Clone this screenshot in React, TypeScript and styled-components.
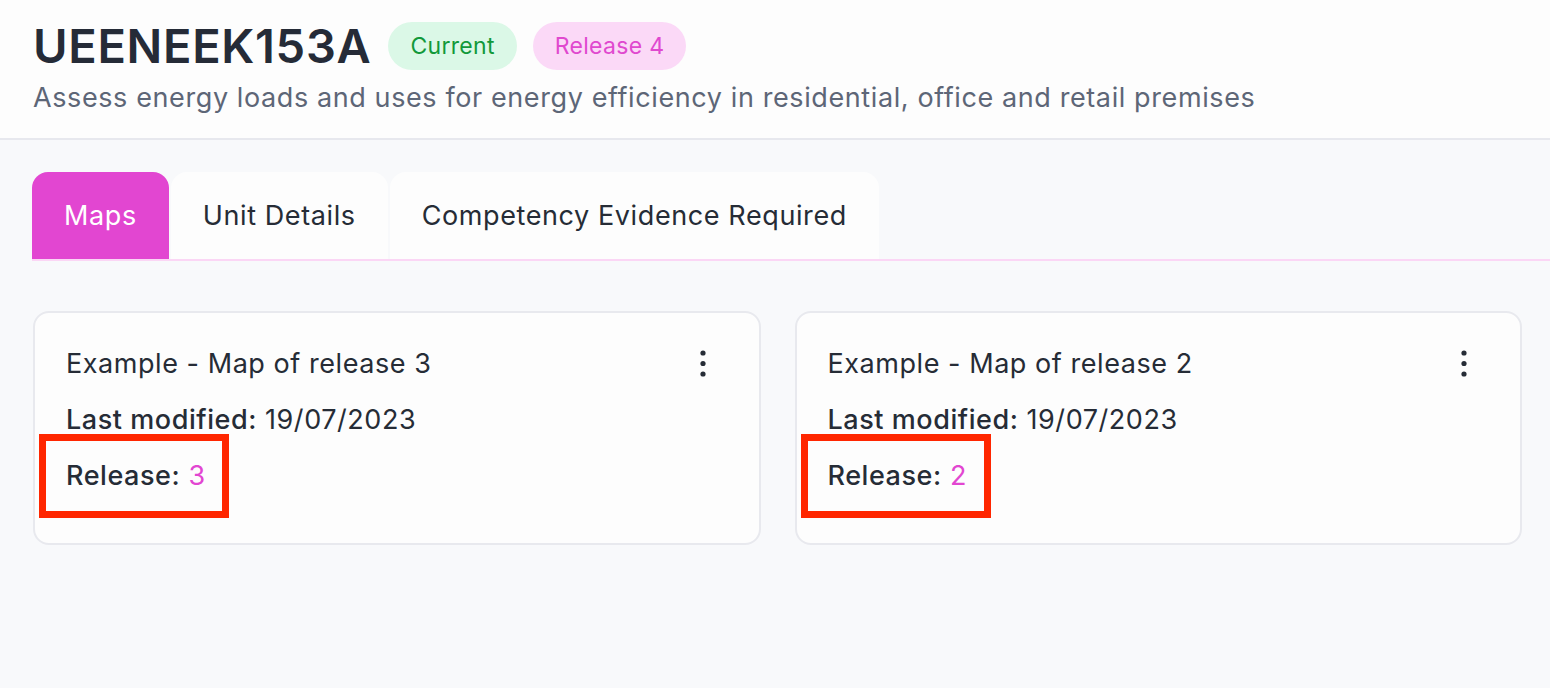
import styled, { createGlobalStyle } from "styled-components";

const GlobalStyle = createGlobalStyle`
  body {
    margin: 0;
    background: #f8f9fb;
    font-family: Inter, "Noto Sans", sans-serif;
    color: #262c36;
  }
`;

const Header = styled.header`
  background: #fdfdfd;
  border-bottom: 2px solid #e7e8ee;
  padding: 20px 33px 24px;
`;

const TitleRow = styled.div`
  display: flex;
  align-items: center;
  gap: 16px;
`;

const Title = styled.h1`
  margin: 0 1px 0 0;
  font-size: 47px;
  font-weight: 600;
  line-height: 52px;
  color: #252b37;
  letter-spacing: 0.7px;
`;

const Badge = styled.span<{ $tone: "green" | "pink" }>`
  display: inline-flex;
  align-items: center;
  height: 48px;
  padding: 0 22px;
  border-radius: 24px;
  font-size: 23px;
  letter-spacing: 0.3px;
  background: ${({ $tone }) => ($tone === "green" ? "#dbf8e7" : "#fbd9f7")};
  color: ${({ $tone }) => ($tone === "green" ? "#12993a" : "#e049cf")};
`;

const Subtitle = styled.p`
  margin: 10px 0 0;
  font-size: 27px;
  line-height: 32px;
  letter-spacing: 0.6px;
  color: #5d6677;
`;

const Main = styled.main`
  padding: 32px 28px 0 32px;
`;

const TabList = styled.div`
  display: flex;
  gap: 2px;
  border-bottom: 2px solid #fbd6f5;
  margin-right: -28px;
`;

const Tab = styled.button<{ $active?: boolean }>`
  height: 87px;
  padding: 0 32px;
  border: none;
  border-radius: 16px 16px 0 0;
  font-family: inherit;
  font-size: 27px;
  letter-spacing: 0.6px;
  cursor: pointer;
  background: ${({ $active }) => ($active ? "#e246d1" : "#fdfdfd")};
  color: ${({ $active }) => ($active ? "#ffffff" : "#262c36")};
`;

const CardGrid = styled.div`
  display: grid;
  grid-template-columns: 1fr 1fr;
  gap: 34px;
  margin-top: 50px;
  padding-left: 1px;
`;

const Card = styled.div`
  background: #fdfdfd;
  border: 2px solid #e8e9ee;
  border-radius: 16px;
  padding: 35px 31px 51px;
  display: flex;
  flex-direction: column;
  gap: 24px;
`;

const CardHead = styled.div`
  display: flex;
  align-items: center;
  justify-content: space-between;
  height: 32px;
`;

const Line = styled.div`
  position: relative;
  font-size: 27px;
  line-height: 32px;
  letter-spacing: 0.55px;
`;

const Label = styled.span`
  font-weight: 500;
`;

const Pink = styled.span`
  color: #e246d1;
`;

const MenuButton = styled.button`
  width: 40px;
  height: 40px;
  margin: -4px 5px -4px 0;
  border: none;
  background: transparent;
  display: flex;
  align-items: center;
  justify-content: center;
  padding: 0;
  cursor: pointer;
`;

const Highlight = styled.span`
  position: absolute;
  left: -27px;
  top: -26px;
  width: 190px;
  height: 84px;
  box-sizing: border-box;
  border: 7px solid #ff2600;
  pointer-events: none;
`;

const Kebab = () => (
  <svg width="6" height="28" viewBox="0 0 6 28">
    <circle cx="3" cy="3" r="2.6" fill="#262c36" />
    <circle cx="3" cy="13.5" r="2.6" fill="#262c36" />
    <circle cx="3" cy="24" r="2.6" fill="#262c36" />
  </svg>
);

const maps = [
  { name: "Example - Map of release 3", modified: "19/07/2023", release: 3 },
  { name: "Example - Map of release 2", modified: "19/07/2023", release: 2 },
];

const App = () => {
  return (
    <>
      <GlobalStyle />
      <Header>
        <TitleRow>
          <Title>UEENEEK153A</Title>
          <Badge $tone="green">Current</Badge>
          <Badge $tone="pink">Release 4</Badge>
        </TitleRow>
        <Subtitle>
          Assess energy loads and uses for energy efficiency in residential,
          office and retail premises
        </Subtitle>
      </Header>
      <Main>
        <TabList>
          <Tab $active>Maps</Tab>
          <Tab>Unit Details</Tab>
          <Tab>Competency Evidence Required</Tab>
        </TabList>
        <CardGrid>
          {maps.map((m) => (
            <Card key={m.name}>
              <CardHead>
                <Line>{m.name}</Line>
                <MenuButton aria-label="More">
                  <Kebab />
                </MenuButton>
              </CardHead>
              <Line>
                <Label>Last modified:</Label> {m.modified}
              </Line>
              <Line>
                <Label>Release:</Label> <Pink>{m.release}</Pink>
                <Highlight />
              </Line>
            </Card>
          ))}
        </CardGrid>
      </Main>
    </>
  );
};

export default App;
